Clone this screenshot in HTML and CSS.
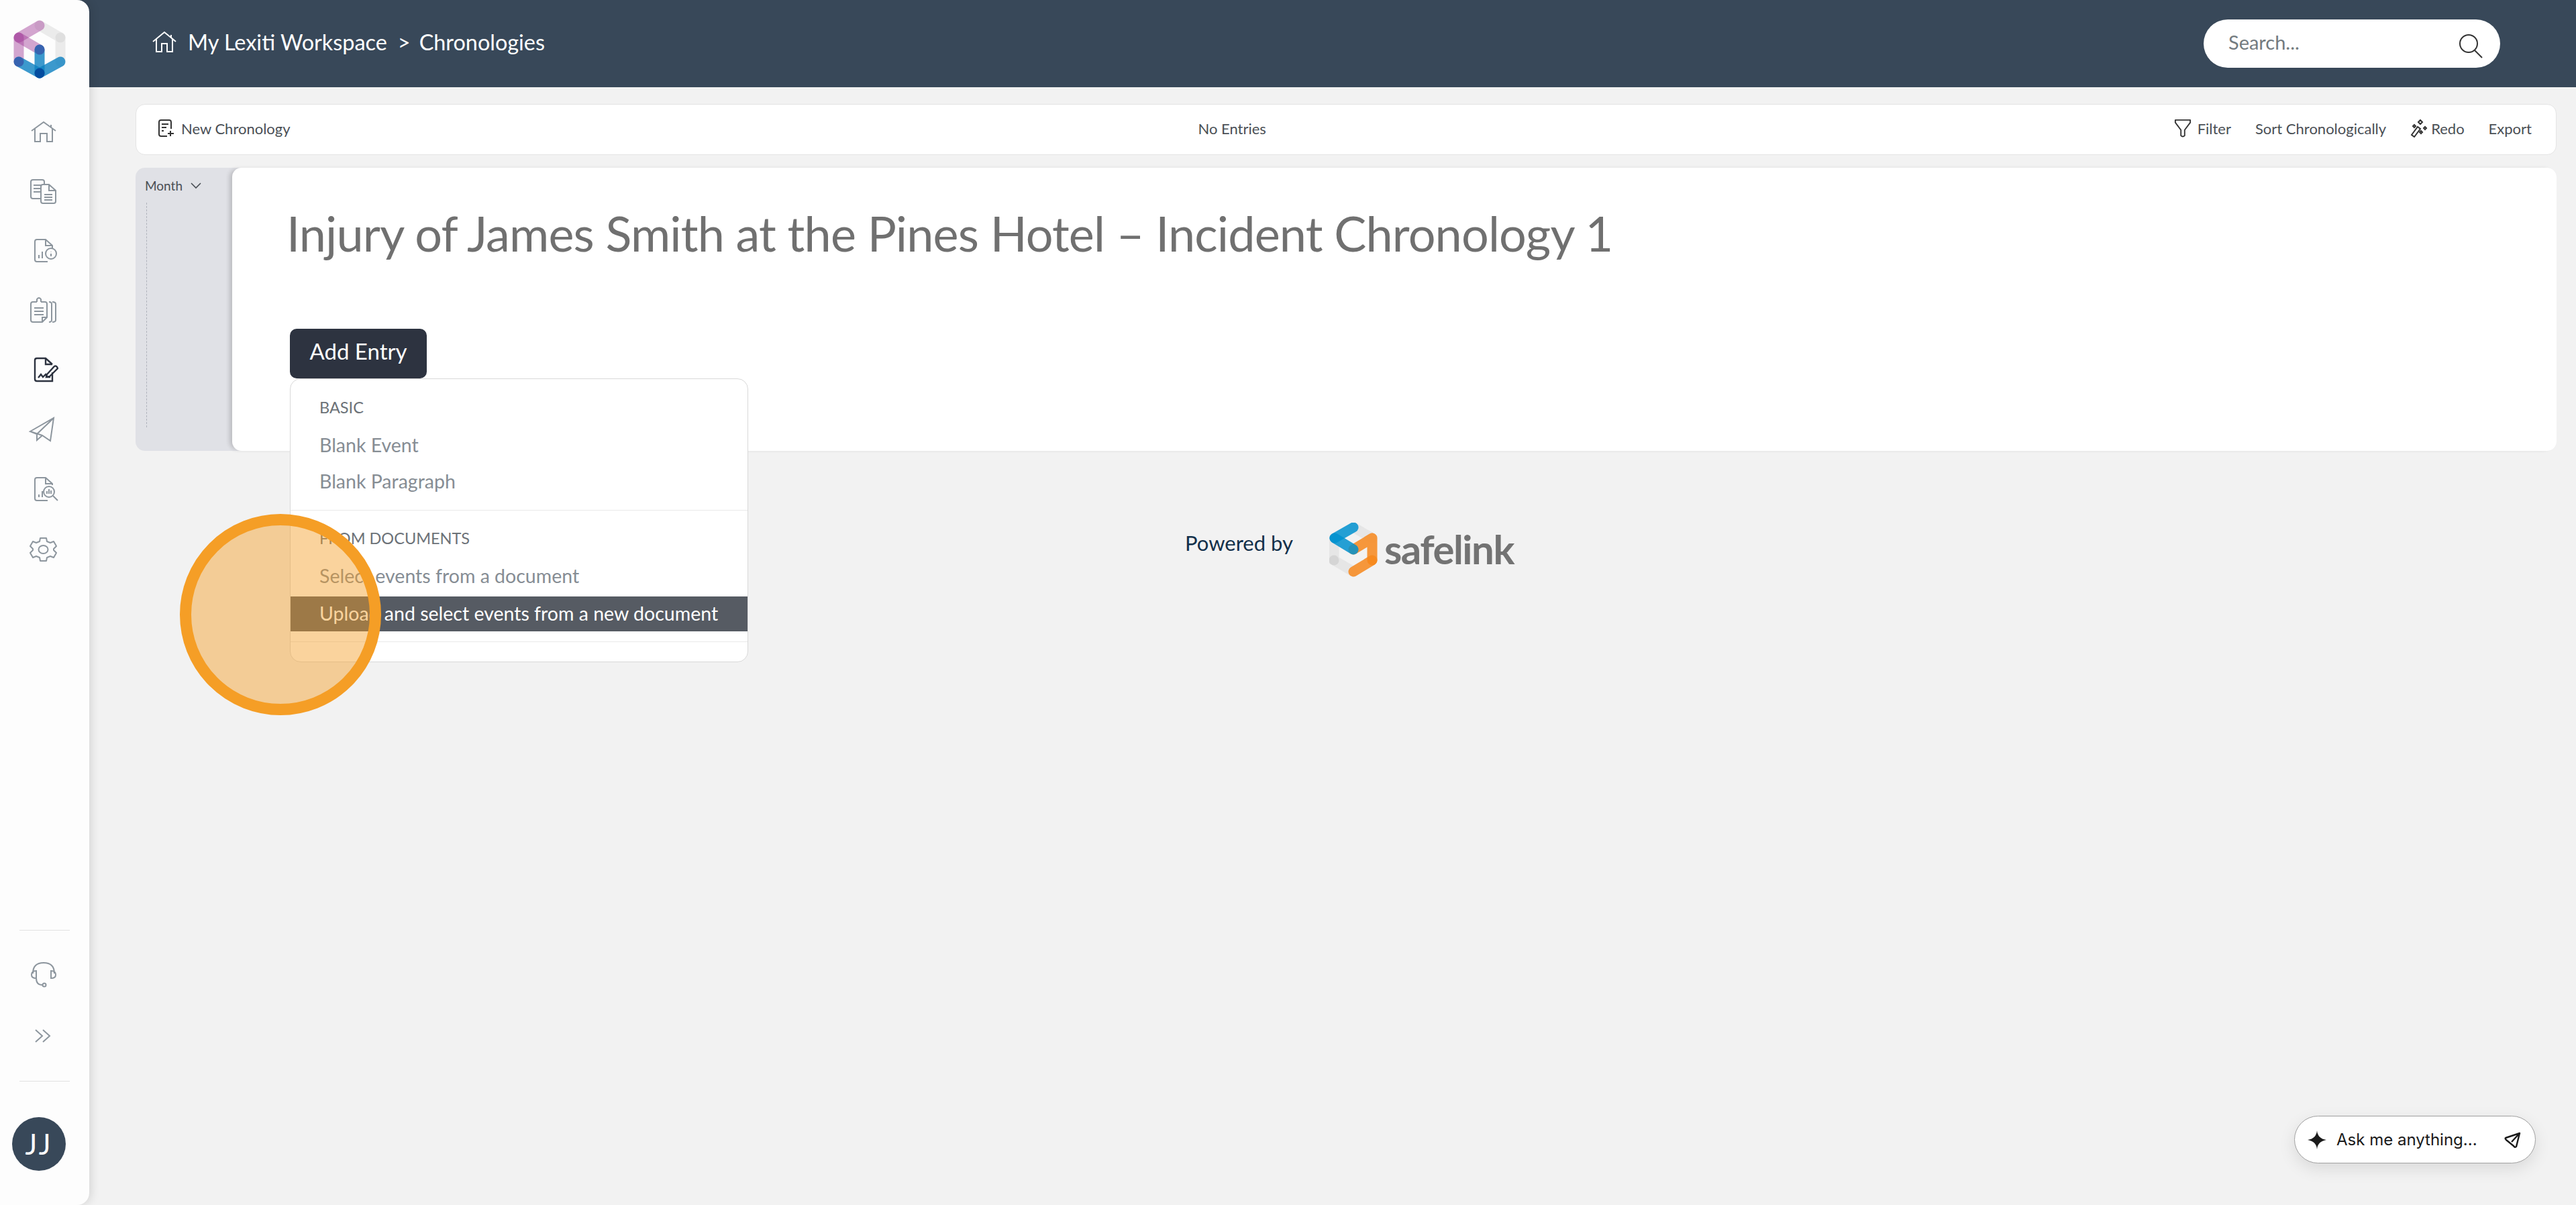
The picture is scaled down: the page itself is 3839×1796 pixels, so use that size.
FILE: index.html
```html
<!DOCTYPE html>
<html lang="en">
<head>
    <meta charset="UTF-8">
    <meta name="viewport" content="width=device-width, initial-scale=1.0">
    <title>Chronologies</title>
    <link rel="stylesheet" href="styles.css">
</head>
<body>
    <div class="app">
        <aside class="sidebar">
            <svg class="side-logo" viewBox="0 0 133 130" stroke-linecap="round" stroke-width="15">
                <path d="M59 38L90 56M90 56V92" stroke="#c9c9c9" stroke-opacity=".35"/>
                <circle class="dot" cx="90" cy="56" r="7.5" fill="#c9c9c9" fill-opacity=".35"/>
                <path d="M59 38L28 56" stroke="#a03a97" stroke-opacity=".45"/>
                <path d="M28 56L59 74" stroke="#a03a97" stroke-opacity=".45"/>
                <path d="M28 56V92" stroke="#a03a97" stroke-opacity=".45"/>
                <path d="M28 92L59 109" stroke="#0b7fc0" stroke-opacity=".8"/>
                <path d="M90 92L59 109" stroke="#0b7fc0" stroke-opacity=".8"/>
                <path d="M59 74V109" stroke="#0b7fc0" stroke-opacity=".8"/>
                <circle class="dot" cx="59" cy="74" r="7.5" fill="#3b3f9c" fill-opacity=".5"/>
                <circle class="dot" cx="28" cy="92" r="7.5" fill="#3b3f9c" fill-opacity=".5"/>
                <circle class="dot" cx="59" cy="109" r="7.5" fill="#023f96" fill-opacity=".8"/>
            </svg>
            <nav class="side-nav">
                <svg class="side-icon" viewBox="0 0 44 44"><path d="M4 21L22 8L40 21M9 17V37H17V25H27V37H35V17M33 12V16"/></svg>
                <svg class="side-icon" viewBox="0 0 44 44"><path d="M18 33H6Q3 33 3 30V8Q3 5 6 5H20Q23 5 23 8V12M7 13H18M7 18H18M7 23H18M21 12H30L40 21V37Q40 40 37 40H21Q18 40 18 37V15Q18 12 21 12ZM30 12V21H40M23 27H35M23 31H35M23 35H35"/></svg>
                <svg class="side-icon" viewBox="0 0 44 44"><path d="M28 38H12Q9 38 9 35V8Q9 5 12 5H25L35 14V18M25 5V14H35M15 33V28M20 33V23"/><circle cx="33" cy="26" r="8"/><path d="M33 23V23.5M33 26V30"/></svg>
                <svg class="side-icon" viewBox="0 0 44 44"><path d="M12 9H6Q3 9 3 12V36Q3 39 6 39H20L27 32V12Q27 9 24 9H18M12 9V5Q15 1 18 5V9M8 18H22M8 23H22M8 28H22M20 39V32H27M30 9Q34 9 34 12V36Q34 39 30 39M35 9Q40 9 40 12V36Q40 39 35 39"/></svg>
                <svg class="side-icon active" viewBox="0 0 44 44"><path d="M35 25V38H12Q9 38 9 35V7Q9 4 12 4H25L35 13M25 4V13H35M14 33L18 28L21 32L25 28L27 32H32M27 28L38 16Q41 14 43 19L31 31L26 32Z"/></svg>
                <svg class="side-icon" viewBox="0 0 44 44"><path d="M2 24L37 4L32 38L20 30ZM37 4L12 28V37L20 30M2 24L12 28"/></svg>
                <svg class="side-icon" viewBox="0 0 44 44"><path d="M35 15V13L25 4H12Q9 4 9 7V35Q9 38 12 38H28M25 4V13H35M15 33V29M20 33V24M36 31L43 38M27 28V24M30 28V21M33 28V23"/><circle cx="30" cy="25" r="8"/></svg>
                <svg class="side-icon" viewBox="0 0 44 44"><path d="M17 5H26L27 10L32 12L37 10L41 17L37 21V23L41 27L37 34L32 32L27 34L26 39H17L16 34L11 32L6 34L2 27L6 23V21L2 17L6 10L11 12L16 10Z" stroke-linejoin="round"/><ellipse cx="21.5" cy="22" rx="7" ry="6"/></svg>
            </nav>
            <div class="side-bottom">
                <div class="side-line"></div>
                <svg class="side-icon" viewBox="0 0 44 44"><path d="M6 21Q6 5 22 5Q38 5 38 21M11 17Q4 17 4 23Q4 28 11 28ZM33 17V28Q40 28 40 23Q40 17 33 17ZM11 28Q11 38 20 38"/><circle cx="23" cy="38" r="2.5"/></svg>
                <svg class="side-icon chev" viewBox="0 0 44 44"><path d="M10 13L20 22L10 31M21 13L31 22L21 31"/></svg>
                <div class="side-line"></div>
                <div class="avatar">JJ</div>
            </div>
        </aside>

        <div class="main">
            <header class="topbar">
                <div class="crumbs">
                    <svg class="crumb-home" viewBox="0 0 38 34"><path d="M2 17L19 3L36 17M7 13V32H15V20H23V32H31V13M29 7V11"/></svg>
                    <span>My Lexiti Workspace</span>
                    <span class="crumb-sep">&gt;</span>
                    <span>Chronologies</span>
                </div>
                <div class="search">
                    <span class="search-text">Search...</span>
                    <svg class="search-icon" viewBox="0 0 38 38"><circle cx="15" cy="15" r="13"/><path d="M24 25L35 36"/></svg>
                </div>
            </header>

            <section class="content">
                <div class="toolbar">
                    <div class="tool">
                        <svg class="tool-icon" viewBox="0 0 26 28"><path d="M14 26H5Q2 26 2 23V5Q2 2 5 2H17Q20 2 20 5V15M6 8H16M6 13H13M6 18H9M19 18V26M15 22H24"/></svg>
                        <span>New Chronology</span>
                    </div>
                    <div class="tool">No Entries</div>
                    <div class="tool-group">
                        <div class="tool">
                            <svg class="tool-icon filter" viewBox="0 0 28 30"><path d="M2 2H26V6L17 18V27Q14 30 11 27V18L2 6Z" stroke-linejoin="round"/></svg>
                            <span>Filter</span>
                        </div>
                        <div class="tool">Sort Chronologically</div>
                        <div class="tool tool-tight">
                            <svg class="tool-icon" viewBox="0 0 26 28"><path d="M2 24L11 12L15 15L6 27ZM15 2L18 5L15 8L12 5ZM6 9L8 11L6 13L4 11ZM22 12L24 14L22 16L20 14ZM16 18L18 20L16 22L14 20Z"/></svg>
                            <span>Redo</span>
                        </div>
                        <div class="tool">Export</div>
                    </div>
                </div>

                <div class="panel">
                    <div class="rail">
                        <div class="rail-head">
                            <span>Month</span>
                            <svg class="rail-chev" viewBox="0 0 16 10"><path d="M1 1L8 8L15 1"/></svg>
                        </div>
                        <div class="rail-line"></div>
                    </div>
                    <div class="sheet">
                        <h1 class="title">Injury of James Smith at the Pines Hotel – Incident Chronology 1</h1>
                        <button class="add-btn">Add Entry</button>
                        <div class="menu">
                            <div class="menu-label">BASIC</div>
                            <div class="menu-item">Blank Event</div>
                            <div class="menu-item">Blank Paragraph</div>
                            <div class="menu-line first"></div>
                            <div class="menu-label">FROM DOCUMENTS</div>
                            <div class="menu-item">Select events from a document</div>
                            <div class="menu-item current">Upload and select events from a new document</div>
                            <div class="menu-line"></div>
                        </div>
                    </div>
                </div>

                <div class="powered">
                    <span class="powered-text">Powered by</span>
                    <div class="brand">
                        <svg class="brand-logo" viewBox="0 0 76 84" stroke-linecap="round" stroke-width="15">
                            <path d="M36 7L64 23M7 23V56L36 73" stroke="#c9c9c9" stroke-opacity=".3"/>
                            <circle class="dot" cx="7" cy="56" r="7.5" fill="#c9c9c9" fill-opacity=".6"/>
                            <path d="M36 40L64 23M64 23V56" stroke="#f7871b" stroke-opacity=".85"/>
                            <path d="M64 56L36 73" stroke="#f7871b" stroke-opacity=".85"/>
                            <path d="M36 7L8 23" stroke="#0090cf" stroke-opacity=".85"/>
                            <path d="M8 23L36 40" stroke="#0090cf" stroke-opacity=".85"/>
                        </svg>
                        <span class="brand-name">safelink</span>
                    </div>
                </div>
            </section>
        </div>
    </div>

    <div class="marker"></div>

    <div class="ask">
        <svg class="ask-star" viewBox="0 0 28 28"><path d="M14 0Q15 12 28 14Q15 16 14 28Q13 16 0 14Q13 12 14 0Z"/></svg>
        <span>Ask me anything...</span>
        <svg class="ask-send" viewBox="0 0 26 26"><path d="M2 10L23 3L18 23Q16 25 14 22L3 13Q1 11 2 10ZM11 16L23 3" stroke-linejoin="round"/></svg>
    </div>
</body>
</html>
```

FILE: styles.css
```css
* {
    box-sizing: border-box;
}
body {
    margin: 0;
    height: 1796px;
    overflow: hidden;
    background-color: #f2f2f2;
    font-family: Lato, "Noto Sans", sans-serif;
    color: #4a4f55;
}
svg {
    fill: none;
    stroke: currentColor;
    display: block;
}
.dot {
    stroke: none;
}
.app {
    display: flex;
    height: 100%;
}

/* left rail */
.sidebar {
    position: relative;
    z-index: 2;
    width: 133px;
    flex-shrink: 0;
    display: flex;
    flex-direction: column;
    background-color: #fdfdfd;
    border-radius: 0 18px 18px 0;
    box-shadow: 3px 0 14px rgba(0, 0, 0, 0.12);
}
.side-logo {
    width: 133px;
    height: 130px;
    flex-shrink: 0;
}
.side-nav {
    margin-top: 44px;
    display: flex;
    flex-direction: column;
    gap: 45px;
}
.side-icon {
    width: 44px;
    height: 44px;
    margin-left: 43px;
    color: #8d969e;
    stroke-width: 2;
}
.side-icon.active {
    color: #2d3340;
    stroke-width: 2.4;
}
.side-bottom {
    margin-top: auto;
    padding-bottom: 51px;
    display: flex;
    flex-direction: column;
}
.side-line {
    width: 75px;
    height: 1px;
    margin-left: 29px;
    background-color: #e2e2e2;
}
.side-bottom .side-icon {
    margin-top: 43px;
}
.side-bottom .side-icon.chev {
    margin-top: 48px;
    margin-bottom: 45px;
}
.avatar {
    width: 80px;
    height: 80px;
    margin: 53px 0 0 18px;
    border-radius: 50%;
    background-color: #384859;
    color: #fff;
    font-size: 42px;
    letter-spacing: 3px;
    display: flex;
    align-items: center;
    justify-content: center;
}

/* header */
.main {
    flex: 1;
    min-width: 0;
}
.topbar {
    height: 130px;
    margin-left: -30px;
    padding: 0 113px 0 123px;
    background-color: #384859;
    color: #fff;
    display: flex;
    align-items: center;
    justify-content: space-between;
}
.crumbs {
    display: flex;
    align-items: center;
    gap: 16px;
    margin-bottom: 6px;
    font-size: 32.4px;
}
.crumb-home {
    width: 38px;
    height: 34px;
    stroke-width: 2;
}
.crumb-sep {
    margin-right: -3px;
}
.search {
    width: 442px;
    height: 72px;
    padding: 0 24px 0 37px;
    border-radius: 36px;
    background-color: #fff;
    color: #737b80;
    font-size: 29px;
    display: flex;
    align-items: center;
    justify-content: space-between;
}
.search-text {
    margin-bottom: 6px;
}
.search-icon {
    width: 38px;
    height: 38px;
    margin-top: 8px;
    color: #333;
    stroke-width: 2;
}

/* toolbar and panel */
.content {
    position: relative;
    padding: 25px 29px 0 69px;
}
.toolbar {
    height: 76px;
    padding: 0 36px 4px 32px;
    background-color: #fff;
    border: 1px solid #e4e4e4;
    border-radius: 14px;
    font-size: 22px;
    display: flex;
    align-items: center;
    justify-content: space-between;
}
.tool {
    display: flex;
    align-items: center;
    gap: 9px;
}
.tool-group {
    display: flex;
    align-items: center;
    gap: 36px;
}
.tool-icon {
    width: 26px;
    height: 28px;
    color: #333;
    stroke-width: 2;
}
.tool-tight {
    gap: 5px;
}
.panel {
    height: 422px;
    margin-top: 19px;
    display: flex;
    background-color: #e0e1e6;
    border-radius: 14px;
}
.rail {
    width: 144px;
    padding: 15px 0 0 14px;
    flex-shrink: 0;
}
.rail-head {
    display: flex;
    align-items: center;
    gap: 12px;
    font-size: 19px;
}
.rail-chev {
    width: 16px;
    height: 10px;
    stroke-width: 1.6;
}
.rail-line {
    width: 0;
    height: 335px;
    margin: 14px 0 0 2px;
    border-left: 1px dashed #b0b3bc;
}
.sheet {
    position: relative;
    flex: 1;
    padding: 52px 0 0 81px;
    background-color: #fff;
    border-radius: 14px;
    box-shadow: -6px 0 6px -2px rgba(0, 0, 0, 0.16);
}
.title {
    margin: 0;
    font-size: 72px;
    line-height: 90px;
    letter-spacing: -0.85px;
    font-weight: 400;
    color: #707070;
}
.add-btn {
    display: block;
    width: 204px;
    height: 74px;
    margin: 98px 0 0 5px;
    padding: 0 0 9px;
    border: none;
    border-radius: 10px;
    background-color: #2d3340;
    color: #fff;
    font-family: inherit;
    font-size: 33px;
}

/* dropdown under the button */
.menu {
    position: absolute;
    top: 314px;
    left: 86px;
    width: 683px;
    height: 423px;
    padding-top: 31px;
    background-color: #fff;
    border: 1px solid #d9d9d9;
    border-radius: 16px;
    z-index: 3;
}
.menu-label {
    height: 24px;
    line-height: 22px;
    padding-left: 43px;
    font-size: 23.5px;
    color: #6c7278;
}
.menu-item {
    height: 54px;
    line-height: 50px;
    padding-left: 43px;
    font-size: 28.5px;
    color: #868d94;
}
.menu-label + .menu-item {
    margin-top: 18px;
}
.menu-item.current {
    height: 52px;
    margin-top: 2px;
    background-color: #565b63;
    color: #fff;
}
.menu-line {
    height: 1px;
    margin-top: 15px;
    background-color: #e9e9e9;
}
.menu-line.first {
    margin-top: 14px;
    margin-bottom: 30px;
}

.powered {
    display: flex;
    align-items: center;
    margin-top: 107px;
    padding-left: 1564px;
    font-size: 31px;
    color: #12304a;
}
.powered-text {
    margin-bottom: 24px;
}
.brand {
    display: flex;
    align-items: center;
    gap: 6px;
    margin-left: 54px;
}
.brand-logo {
    width: 76px;
    height: 84px;
}
.brand-name {
    margin-bottom: 6px;
    font-size: 60px;
    font-weight: 700;
    letter-spacing: -1.5px;
    color: #737373;
}

/* overlays */
.marker {
    position: absolute;
    z-index: 5;
    left: 268px;
    top: 766px;
    width: 300px;
    height: 300px;
    border: 17px solid #f59e26;
    border-radius: 50%;
    background-color: rgba(245, 158, 38, 0.45);
}
.ask {
    position: absolute;
    z-index: 5;
    left: 3419px;
    top: 1663px;
    width: 360px;
    height: 71px;
    padding: 0 20px 0 19px;
    background-color: #fff;
    border: 1px solid #a0a0a0;
    border-radius: 36px;
    box-shadow: 0 8px 24px rgba(0, 0, 0, 0.1);
    color: #1a1a1a;
    font-family: Inter, sans-serif;
    font-size: 24px;
    display: flex;
    align-items: center;
    gap: 15px;
}
.ask-star {
    width: 28px;
    height: 28px;
    fill: #1a1a1a;
    stroke: none;
}
.ask-send {
    width: 26px;
    height: 26px;
    margin-left: auto;
    stroke-width: 2.4;
}
```
